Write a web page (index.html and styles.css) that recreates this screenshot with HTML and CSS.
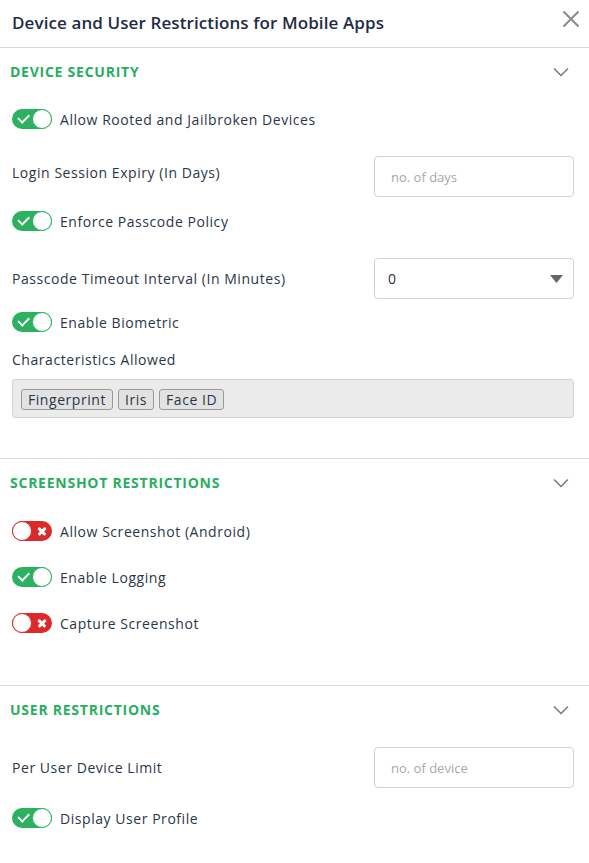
FILE: index.html
```html
<!DOCTYPE html>
<html>
<head>
<meta charset="utf-8">
<link rel="stylesheet" href="styles.css">
</head>
<body>
<div class="panel">
  <div class="header">
    <h1 class="title">Device and User Restrictions for Mobile Apps</h1>
    <svg class="close" width="18" height="18" viewBox="0 0 18 18"><path d="M1.5 1.5 L16.5 16.5 M16.5 1.5 L1.5 16.5" stroke="#8a8a8a" stroke-width="2" fill="none"/></svg>
  </div>

  <section class="section sec-device">
    <div class="sec-head">
      <span class="sec-title">DEVICE SECURITY</span>
      <svg class="chev" width="16" height="10" viewBox="0 0 16 10"><path d="M1 1.5 L8 8.5 L15 1.5" stroke="#707a85" stroke-width="1.5" fill="none"/></svg>
    </div>
    <div class="row r-t1"><span class="tog on"><span class="knob"></span></span><span class="lbl">Allow Rooted and Jailbroken Devices</span></div>
    <div class="row field r-f1"><span class="lbl raise">Login Session Expiry (In Days)</span><div class="input ph">no. of days</div></div>
    <div class="row r-t2"><span class="tog on"><span class="knob"></span></span><span class="lbl">Enforce Passcode Policy</span></div>
    <div class="row field r-f2"><span class="lbl">Passcode Timeout Interval (In Minutes)</span><div class="input select"><span>0</span><svg width="13" height="8" viewBox="0 0 13 8"><path d="M0 0 H13 L6.5 8 Z" fill="#666"/></svg></div></div>
    <div class="row r-t3"><span class="tog on"><span class="knob"></span></span><span class="lbl">Enable Biometric</span></div>
    <div class="lbl char-lbl">Characteristics Allowed</div>
    <div class="multi"><span class="chip">Fingerprint</span><span class="chip">Iris</span><span class="chip">Face ID</span></div>
  </section>

  <section class="section sec-shot">
    <div class="sec-head">
      <span class="sec-title">SCREENSHOT RESTRICTIONS</span>
      <svg class="chev" width="16" height="10" viewBox="0 0 16 10"><path d="M1 1.5 L8 8.5 L15 1.5" stroke="#707a85" stroke-width="1.5" fill="none"/></svg>
    </div>
    <div class="row r-s1"><span class="tog off"><span class="knob"></span></span><span class="lbl">Allow Screenshot (Android)</span></div>
    <div class="row r-s2"><span class="tog on"><span class="knob"></span></span><span class="lbl">Enable Logging</span></div>
    <div class="row r-s2"><span class="tog off"><span class="knob"></span></span><span class="lbl">Capture Screenshot</span></div>
  </section>

  <section class="section sec-user">
    <div class="sec-head">
      <span class="sec-title">USER RESTRICTIONS</span>
      <svg class="chev" width="16" height="10" viewBox="0 0 16 10"><path d="M1 1.5 L8 8.5 L15 1.5" stroke="#707a85" stroke-width="1.5" fill="none"/></svg>
    </div>
    <div class="row field r-u1"><span class="lbl">Per User Device Limit</span><div class="input ph">no. of device</div></div>
    <div class="row r-u2"><span class="tog on"><span class="knob"></span></span><span class="lbl">Display User Profile</span></div>
  </section>
</div>
</body>
</html>
```

FILE: styles.css
```css
* { box-sizing: border-box; }
html, body { margin: 0; padding: 0; background: #fff; }
body { font-family: "Open Sans", "Liberation Sans", sans-serif; color: #2b3648; width: 589px; height: 863px; overflow: hidden; }

.header { height: 48px; border-bottom: 1px solid #d9d9d9; display: flex; align-items: center; justify-content: space-between; padding: 0 9px 3px 12px; }
.title { margin: 0; font-size: 17px; font-weight: 600; color: #1f2d44; letter-spacing: 0.1px; }
.close { margin-top: -6px; }

.section { border-bottom: 1px solid #d9d9d9; }
.sec-device { padding-bottom: 40px; }
.sec-shot { padding-bottom: 52px; }
.sec-user { border-bottom: none; }

.sec-head { height: 46px; display: flex; align-items: center; justify-content: space-between; padding: 0 20px 0 10px; }
.sec-title { font-size: 14px; font-weight: 700; color: #27ae5f; letter-spacing: 0.75px; }
.chev { margin-top: 1px; }

.row { display: flex; align-items: center; padding: 0 15px 0 12px; }
.lbl { font-size: 14px; color: #2b3648; letter-spacing: 0.55px; }
.row .tog + .lbl { margin-left: 8px; }
.field { justify-content: space-between; }
.raise { margin-bottom: 9px; }

.r-t1 { margin-top: 15px; }
.r-f1 { margin-top: 27px; }
.r-t2 { margin-top: 14px; }
.r-f2 { margin-top: 27px; }
.r-t3 { margin-top: 13px; }
.r-s1 { margin-top: 16px; }
.r-s2 { margin-top: 26px; }
.r-u1 { margin-top: 15px; }
.r-u2 { margin-top: 20px; }

.tog { position: relative; width: 40px; height: 20px; border-radius: 10px; flex: none; display: inline-block; }
.tog .knob { position: absolute; top: 0; width: 20px; height: 20px; border-radius: 50%; background: #fff; }
.tog.on { background: #2bb160; }
.tog.on .knob { right: 0; border: 1.5px solid #2bb160; }
.tog.on::before { content: ""; position: absolute; left: 6px; top: 5px; width: 9px; height: 4.5px; border-left: 2.6px solid #fff; border-bottom: 2.6px solid #fff; transform: rotate(-45deg); }
.tog.off { background: #dc2a2a; }
.tog.off .knob { left: 0; border: 1.5px solid #dc2a2a; }
.tog.off::before, .tog.off::after { content: ""; position: absolute; left: 25px; top: 8.8px; width: 10px; height: 2.6px; background: #fff; border-radius: 1px; transform: rotate(45deg); }
.tog.off::after { transform: rotate(-45deg); }

.input { width: 200px; height: 41px; border: 1px solid #cfd3d8; border-radius: 4px; display: flex; align-items: center; padding: 0 10px 0 16px; font-size: 13px; }
.input.ph { color: #a3a8b0; }
.select { justify-content: space-between; color: #2b3648; font-size: 14px; padding-left: 13px; }

.char-lbl { margin: 19px 0 0 12px; line-height: 18px; }
.multi { margin: 10px 15px 0 12px; height: 39px; background: #ebebeb; border: 1px solid #d3d3d3; border-radius: 3px; display: flex; align-items: center; gap: 5px; padding: 2px 8px 0; }
.chip { height: 21px; border: 1px solid #9a9a9a; border-radius: 3px; background: #e2e2e2; font-size: 14px; color: #2b3648; display: flex; align-items: center; padding: 0 6px; letter-spacing: 0.55px; }
```
